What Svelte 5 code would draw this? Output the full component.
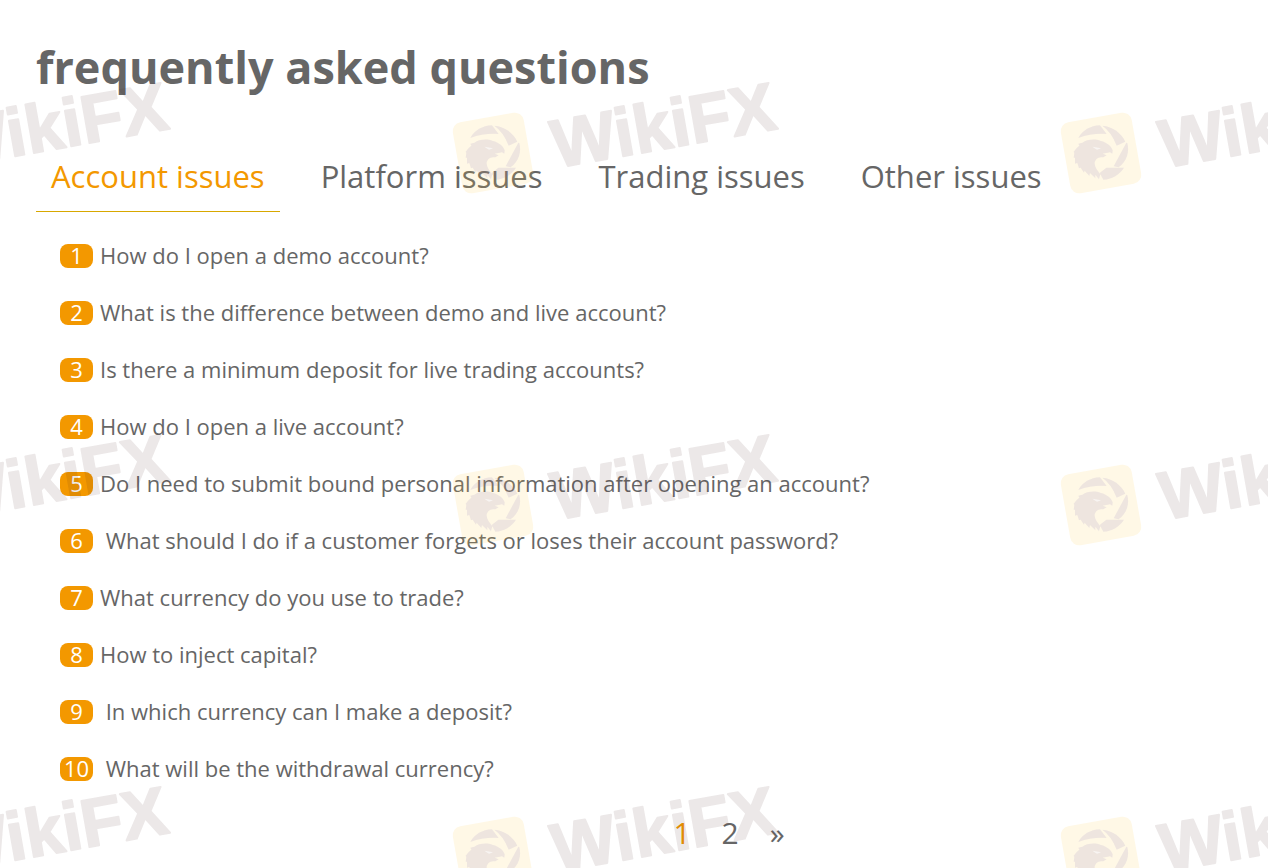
<script>
  const tabs = ['Account issues', 'Platform issues', 'Trading issues', 'Other issues'];
  const questions = [
    'How do I open a demo account?',
    'What is the difference between demo and live account?',
    'Is there a minimum deposit for live trading accounts?',
    'How do I open a live account?',
    'Do I need to submit bound personal information after opening an account?',
    '\u00a0What should I do if a customer forgets or loses their account password?',
    'What currency do you use to trade?',
    'How to inject capital?',
    '\u00a0In which currency can I make a deposit?',
    '\u00a0What will be the withdrawal currency?'
  ];
  let active = $state(0);
  let page = $state(1);
</script>

<main>
  <h1>frequently asked questions</h1>

  <nav class="tabs" aria-label="Topics">
    {#each tabs as tab, i}
      <button class="tab" class:active={active === i} onclick={() => (active = i)}>{tab}</button>
    {/each}
  </nav>

  <ol class="questions">
    {#each questions as question, i}
      <li>
        <span class="number">{i + 1}</span>
        <a href="#question-{i + 1}">{question}</a>
      </li>
    {/each}
  </ol>

  <nav class="pager" aria-label="Pages">
    <button class:active={page === 1} onclick={() => (page = 1)}>1</button>
    <button class:active={page === 2} onclick={() => (page = 2)}>2</button>
    <button class="next" onclick={() => (page = 2)}>»</button>
  </nav>

  <svg class="watermark" aria-hidden="true">
    <defs>
      <pattern id="mark" patternUnits="userSpaceOnUse" x="440" y="70" width="608" height="352">
        <rect x="17" y="47" width="72" height="72" rx="9" fill="#ffc83c" fill-opacity="0.13" transform="rotate(-10 53 83)" />
        <g transform="translate(7 35) scale(0.3333)" fill="#7864b4" fill-opacity="0.13">
          <path d="M70 99C82 76 106 62 135 61L155 87Q112 84 70 99Z" />
          <path d="M142 62C174 65 199 84 211 110L185 122Q170 82 142 62Z" />
          <path d="M214 113L217 114C224 142 215 169 191 187L176 184Z" />
          <path d="M134 204L154 188L207 188C192 211 170 223 145 224Z" />
          <path d="M65 129L73 122L70 116L82 113C96 103 119 100 138 108C155 112 169 123 173 136L172 146L165 142L143 146L155 151L145 157C129 154 120 164 119 174C119 187 128 197 136 208L132 223L121 209L121 220L105 204L103 213L89 197L87 203L77 188L72 190L67 174L60 176L60 158L56 158L58 144L56 140Z" />
          <path d="M112 125L138 130L126 134Z" fill="#fff" fill-opacity="0.6" />
        </g>
        <text class="brand" x="116" y="98" transform="rotate(-10 116 98)">WikiFX</text>
      </pattern>
    </defs>
    <rect width="100%" height="100%" fill="url(#mark)" />
  </svg>
</main>

<style>
  :global(body) {
    margin: 0;
    background: #fff;
  }
  main {
    position: relative;
    overflow: hidden;
    min-height: 100vh;
    box-sizing: border-box;
    padding: 35px 36px 0;
    font-family: 'Segoe UI', 'Open Sans', 'Noto Sans', sans-serif;
    color: #666;
  }
  h1 {
    margin: 0;
    font-size: 45px;
    line-height: 64px;
    font-weight: 700;
  }
  button {
    border: 0;
    background: none;
    font: inherit;
    color: inherit;
    cursor: pointer;
  }
  .tabs {
    display: flex;
    flex-wrap: wrap;
    gap: 26px;
    margin-top: 43px;
  }
  .tab {
    padding: 0 15px;
    border-bottom: 1px solid transparent;
    font-size: 31px;
    line-height: 69px;
  }
  .active {
    color: #f39800;
  }
  .tab.active {
    border-bottom-color: #d8a800;
  }
  .questions {
    list-style: none;
    margin: 15px 0 0;
    padding: 0 24px;
  }
  li {
    display: flex;
    align-items: center;
    gap: 7px;
    height: 57px;
    font-size: 22px;
  }
  .number {
    width: 33px;
    height: 24px;
    border-radius: 8px;
    background: #f39800;
    color: #fff;
    font-weight: 500;
    line-height: 22px;
    text-align: center;
  }
  a {
    padding-bottom: 2px;
    color: inherit;
    text-decoration: none;
  }
  .pager {
    display: flex;
    justify-content: center;
    align-items: center;
    gap: 31px;
    margin-top: 12px;
    padding-left: 190px;
    font-size: 30px;
    line-height: 48px;
  }
  .pager button {
    padding: 0;
  }
  .watermark {
    position: absolute;
    inset: 0;
    width: 100%;
    height: 100%;
    pointer-events: none;
  }
  .brand {
    font: 700 68px 'Liberation Sans', Arial, sans-serif;
    fill: #3c1414;
    stroke: #3c1414;
    stroke-width: 2px;
    stroke-linejoin: round;
    opacity: 0.1;
  }
</style>
